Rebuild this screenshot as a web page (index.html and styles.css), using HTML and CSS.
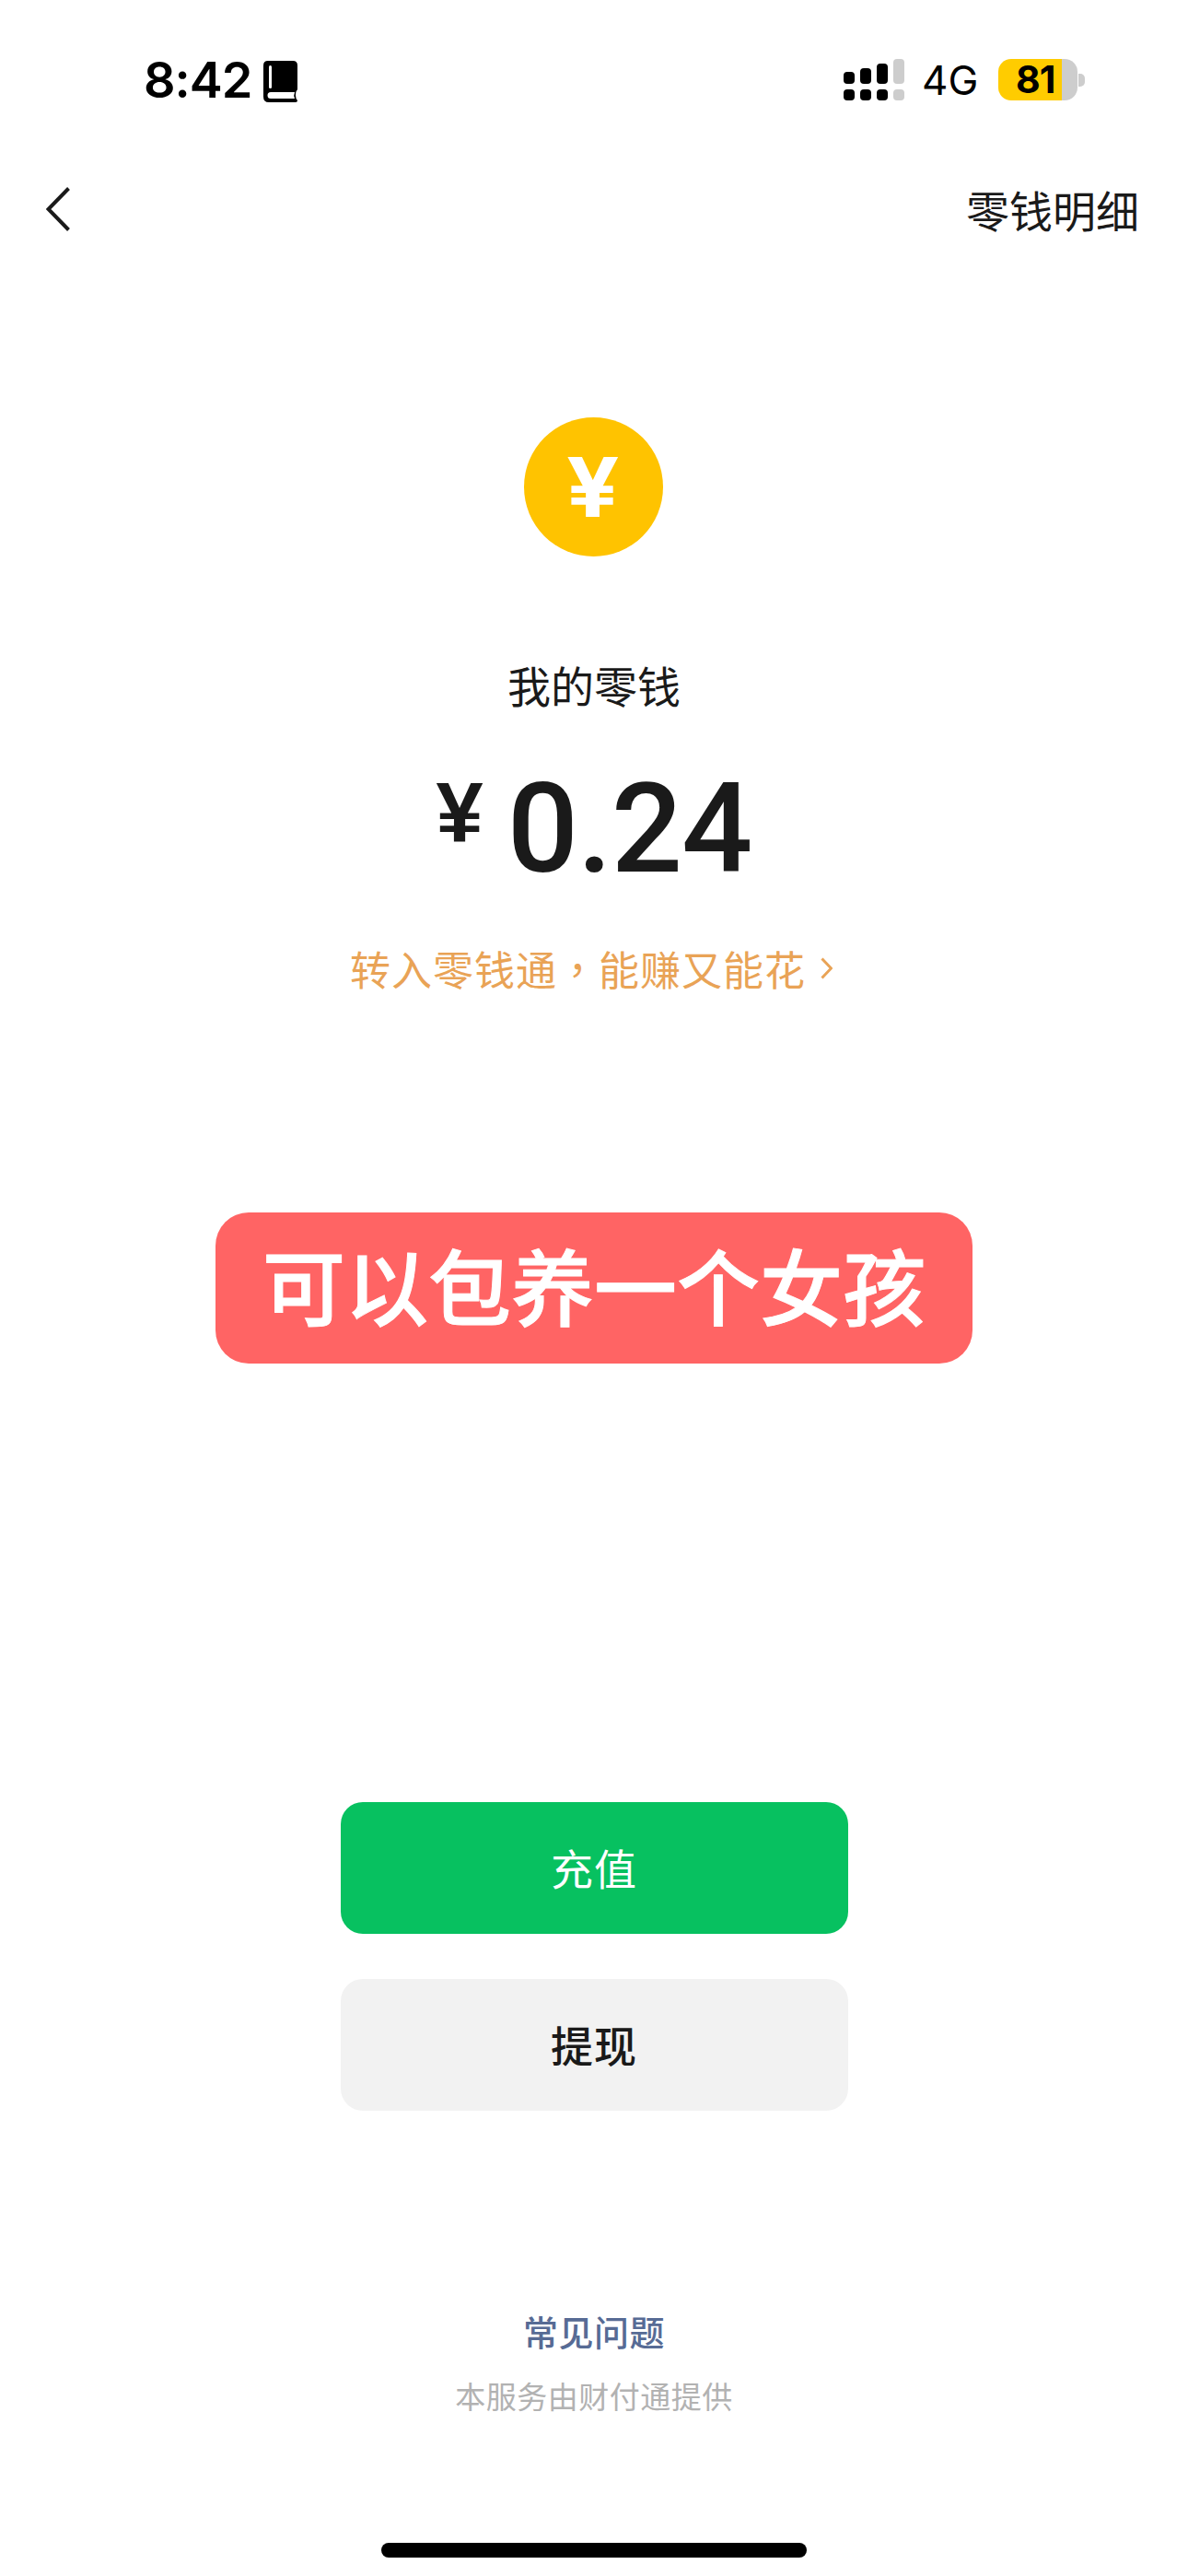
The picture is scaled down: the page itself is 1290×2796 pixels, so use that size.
FILE: index.html
```html
<!DOCTYPE html>
<html lang="zh-CN">
<head>
  <meta charset="UTF-8" />
  <meta name="viewport" content="width=device-width, initial-scale=1.0"/>
  <title>我的零钱</title>
  <link rel="stylesheet" href="styles.css">
</head>
<body>

<div class="page">

  <div class="status-bar">
    <div class="status-left">
      <span class="time">8:42</span>
      <svg class="book-icon" width="37" height="45" viewBox="0 0 37 45">
        <path d="M5 0H32Q37 0 37 5V31Q35 33 35 37.500Q35 41 37 43Q37 45 35 45H6Q0 45 0 39V5Q0 0 5 0Z" fill="#000"/>
        <rect x="6" y="5" width="3" height="25" rx="1.500" fill="#fff"/>
        <path d="M8 34H34Q32.500 37.500 34 41H8Q4.500 41 4.500 37.500Q4.500 34 8 34Z" fill="#fff"/>
      </svg>
    </div>
    <div class="status-right">
      <div class="signal">
        <div class="signal-col"><i class="bar h13"></i><i class="dot"></i></div>
        <div class="signal-col"><i class="bar h17"></i><i class="dot"></i></div>
        <div class="signal-col"><i class="bar h22"></i><i class="dot"></i></div>
        <div class="signal-col off"><i class="bar h27"></i><i class="dot"></i></div>
      </div>
      <span class="network">4G</span>
      <div class="battery">
        <div class="battery-body"><span class="battery-level">81</span></div>
        <i class="battery-nub"></i>
      </div>
    </div>
  </div>

  <div class="nav">
    <svg class="back-icon" width="26" height="48" viewBox="0 0 26 48">
      <path d="M24.500 1.500L2.500 24L24.500 46.500" fill="none" stroke="#1a1a1a" stroke-width="4"/>
    </svg>
    <span class="nav-link">零钱明细</span>
  </div>

  <main class="balance">
    <div class="coin"><span class="coin-sign">¥</span></div>
    <p class="balance-label">我的零钱</p>
    <div class="amount">
      <span class="amount-sign">¥</span>
      <span class="amount-value">0.24</span>
    </div>
    <div class="promo">
      <span>转入零钱通<span class="promo-comma" lang="zh-TW">，</span>能赚又能花</span>
      <svg width="13" height="24" viewBox="0 0 13 24">
        <path d="M1.500 1.500L11.500 12L1.500 22.500" fill="none" stroke="#e9a356" stroke-width="3"/>
      </svg>
    </div>
    <div class="sticker">可以包养一个女孩</div>
  </main>

  <div class="actions">
    <div class="btn btn-primary">充值</div>
    <div class="btn btn-default">提现</div>
  </div>

  <footer class="foot">
    <span class="foot-link">常见问题</span>
    <span class="foot-note">本服务由财付通提供</span>
  </footer>

  <div class="home-bar"></div>

</div>

</body>
</html>
```

FILE: styles.css
```css
:root {
  --text: #1a1a1a;
  --green: #07c160;
  --yellow: #ffc300;
  --cjk: "Noto Sans CJK SC", "Noto Sans", sans-serif;
}

* {
  margin: 0;
  padding: 0;
  box-sizing: border-box;
}

body {
  background: #fff;
  color: var(--text);
  font-family: var(--cjk);
}

.page {
  width: 1290px;
  height: 2796px;
  overflow: hidden;
  display: flex;
  flex-direction: column;
}

/* status bar */
.status-bar {
  display: flex;
  justify-content: space-between;
  align-items: flex-start;
  height: 203px;
  padding: 64px 112px 0 156px;
}

.status-left {
  display: flex;
  align-items: flex-start;
  gap: 13px;
}

.time {
  font-family: Inter, sans-serif;
  font-size: 54px;
  font-weight: 600;
  line-height: 45px;
  color: #000;
  letter-spacing: -1px;
}

.book-icon {
  margin-top: 2px;
}

.status-right {
  display: flex;
  align-items: flex-start;
}

.signal {
  display: flex;
  gap: 6px;
  height: 45px;
  align-items: flex-end;
}

.signal-col {
  display: flex;
  flex-direction: column;
  gap: 6px;
  width: 12px;
}

.signal-col i {
  display: block;
  background: #000;
  border-radius: 4px;
}

.signal-col.off i {
  background: #cdcdcd;
}

.dot { height: 12px; }
.h13 { height: 13px; }
.h17 { height: 17px; }
.h22 { height: 22px; }
.h27 { height: 27px; }

.network {
  font-family: Inter, sans-serif;
  font-size: 44px;
  line-height: 45px;
  color: #000;
  margin-left: 19px;
  margin-top: 1px;
  width: 83px;
}

.battery {
  display: flex;
  align-items: center;
  height: 45px;
}

.battery-body {
  width: 86px;
  height: 45px;
  border-radius: 14px;
  background: linear-gradient(90deg, #ffcc00 0 69px, #cdcdcd 69px);
  padding-left: 19px;
}

.battery-level {
  font-family: Inter, sans-serif;
  font-size: 41px;
  font-weight: 700;
  line-height: 45px;
  color: #000;
  letter-spacing: -1px;
}

.battery-nub {
  display: block;
  width: 7px;
  height: 14px;
  background: #cdcdcd;
  border-radius: 0 5px 5px 0;
  margin-left: 1px;
}

/* nav */
.nav {
  display: flex;
  justify-content: space-between;
  align-items: center;
  height: 48px;
  padding: 0 53px 0 50px;
}

.nav-link {
  font-size: 47px;
  line-height: 48px;
}

/* balance */
.balance {
  display: flex;
  flex-direction: column;
  align-items: center;
  flex: 1;
}

.coin {
  width: 151px;
  height: 151px;
  margin: 202px 2px 0 0;
  border-radius: 50%;
  background: var(--yellow);
  color: #fff;
  font-family: Inter, sans-serif;
  font-size: 90px;
  font-weight: 700;
  line-height: 151px;
  text-align: center;
}

.coin-sign {
  display: inline-block;
  transform: scaleX(1.12);
}

.balance-label {
  margin-top: 111px;
  font-size: 47px;
  line-height: 56px;
}

.amount {
  display: flex;
  align-items: flex-start;
  margin-top: 69px;
  height: 118px;
}

.amount-sign {
  font-family: "Liberation Sans", sans-serif;
  font-size: 92px;
  font-weight: 700;
  line-height: 84px;
  margin-right: 26px;
}

.amount-value {
  font-family: Roboto, sans-serif;
  font-size: 136px;
  font-weight: 500;
  line-height: 116px;
  padding-top: 2px;
  letter-spacing: -1px;
}

.promo {
  display: flex;
  align-items: center;
  gap: 16px;
  margin: 65px 6px 0 0;
  font-size: 44px;
  line-height: 56px;
  letter-spacing: 1px;
  color: #e9a356;
}

.promo-comma {
  font-family: "Noto Sans CJK TC", sans-serif;
}

.sticker {
  display: flex;
  align-items: center;
  justify-content: center;
  width: 822px;
  height: 164px;
  margin-top: 237px;
  padding-bottom: 10px;
  border-radius: 36px;
  background: #ff6464;
  color: #fff;
  font-size: 90px;
  font-weight: 500;
  -webkit-text-stroke: 1px #fff;
}

/* buttons */
.actions {
  display: flex;
  flex-direction: column;
  align-items: center;
  gap: 49px;
}

.btn {
  display: flex;
  align-items: center;
  justify-content: center;
  width: 551px;
  height: 143px;
  padding-bottom: 4px;
  border-radius: 24px;
  font-size: 46px;
  letter-spacing: 1px;
}

.btn-primary {
  background: var(--green);
  color: #fff;
}

.btn-default {
  background: #f2f2f2;
  color: var(--text);
  font-weight: 500;
}

/* footer */
.foot {
  display: flex;
  flex-direction: column;
  align-items: center;
  gap: 24px;
  margin-top: 215px;
}

.foot-link {
  font-size: 38px;
  font-weight: 500;
  line-height: 48px;
  letter-spacing: 0.500px;
  color: #576b95;
}

.foot-note {
  font-size: 33px;
  line-height: 44px;
  letter-spacing: 0.500px;
  color: #b2b2b2;
}

.home-bar {
  width: 462px;
  height: 16px;
  margin: 138px auto 20px;
  border-radius: 8px;
  background: #000;
}
```
